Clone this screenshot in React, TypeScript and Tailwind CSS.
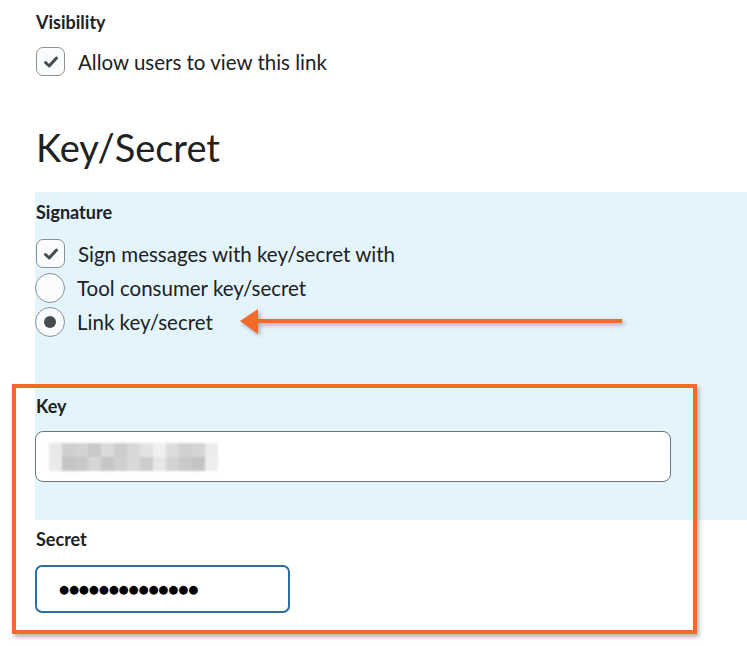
import React from "react";

function CheckBox() {
  return (
    <div className="w-[29px] h-[29px] rounded-[7px] border border-[#8a9094] bg-[#f9fbfc] flex items-center justify-center shrink-0">
      <svg width="16" height="14" viewBox="0 0 16 14">
        <path d="M2.5 7.5 L6.2 11 L13.5 3" fill="none" stroke="#494c4e" strokeWidth="3" strokeLinecap="round" strokeLinejoin="round" />
      </svg>
    </div>
  );
}

function Radio({ checked }: { checked?: boolean }) {
  return (
    <div className="w-[30px] h-[30px] rounded-full border border-[#8a9094] bg-[#f9fbfc] flex items-center justify-center shrink-0">
      {checked && <div className="w-[12px] h-[12px] rounded-full bg-[#494c4e]" />}
    </div>
  );
}

const mosaicRow1 = ["#e8e8e8", "#cfcfcf", "#d3d3d3", "#c9c9c9", "#dadada", "#cdcdcd", "#d8d8d8", "#e3e3e3", "#f0f0f0", "#dcdcdc", "#d0d0d0", "#d5d5d5", "#ececec"];
const mosaicRow2 = ["#eaeaea", "#c4c4c4", "#c8c8c8", "#d6d6d6", "#c6c6c6", "#cfcfcf", "#d9d9d9", "#cccccc", "#e7e7e7", "#d3d3d3", "#c9c9c9", "#c4c4c4", "#eeeeee"];

export default function App() {
  return (
    <div className="relative w-[747px] h-[646px] bg-white overflow-hidden text-[#202122]" style={{ fontFamily: "Lato, 'Noto Sans', sans-serif" }}>
      <div className="pl-[36px] pt-[11px]">
        <div className="text-[18px] leading-[22px] font-bold">Visibility</div>
        <div className="mt-[14px] flex items-center gap-[13px] h-[29px]">
          <CheckBox />
          <span className="text-[20.5px] leading-[24px]">Allow users to view this link</span>
        </div>
        <h1 className="mt-[47px] text-[38px] leading-[48px] font-normal">Key/Secret</h1>
      </div>

      <div className="ml-[35px] mt-[21px] bg-[#e4f4fd] pl-[1px] pt-[9px] pb-[38px]">
        <div className="text-[18px] leading-[22px] font-bold">Signature</div>
        <div className="mt-[16px] flex flex-col">
          <div className="flex items-center gap-[13px] h-[29px]">
            <CheckBox />
            <span className="text-[20.5px] leading-[24px]">Sign messages with key/secret with</span>
          </div>
          <div className="mt-[5px] flex items-center gap-[12px] h-[30px] -ml-[1px]">
            <Radio />
            <span className="text-[20.5px] leading-[24px]">Tool consumer key/secret</span>
          </div>
          <div className="mt-[4px] flex items-center gap-[12px] h-[30px] -ml-[1px]">
            <Radio checked />
            <span className="text-[20.5px] leading-[24px]">Link key/secret</span>
          </div>
        </div>
        <div className="mt-[58px] text-[18px] leading-[22px] font-bold">Key</div>
        <div className="mt-[14px] -ml-[1px] w-[636px] h-[51px] rounded-[8px] border border-[#6e7477] bg-white flex items-center pl-[13px]">
          <div className="flex flex-col blur-[1px]">
            <div className="flex">
              {mosaicRow1.map((c, i) => (
                <div key={i} className="w-[13px] h-[14px]" style={{ background: c }} />
              ))}
            </div>
            <div className="flex">
              {mosaicRow2.map((c, i) => (
                <div key={i} className="w-[13px] h-[14px]" style={{ background: c }} />
              ))}
            </div>
          </div>
        </div>
      </div>

      <div className="pl-[36px] pt-[8px]">
        <div className="text-[18px] leading-[22px] font-bold">Secret</div>
        <div className="mt-[15px] -ml-[1px] w-[255px] h-[48px] rounded-[7px] border-2 border-[#2a6fa0] bg-white flex items-center pl-[22px]">
          <span className="text-[11.5px] leading-[20px] tracking-[-0.1px] text-black" style={{ fontFamily: "'DejaVu Sans', sans-serif" }}>
            ●●●●●●●●●●●●●●
          </span>
        </div>
      </div>

      {/* Orange highlight rectangle */}
      <div className="absolute left-[12px] top-[384px] w-[685px] h-[250px] border-[4px] border-[#f26b2b] shadow-[2px_3px_4px_rgba(0,0,0,0.3)] pointer-events-none" />

      {/* Arrow */}
      <svg className="absolute left-[236px] top-[304px] pointer-events-none" width="392" height="36" viewBox="236 304 392 36" style={{ filter: "drop-shadow(2px 2px 2px rgba(0,0,0,0.3))" }}>
        <line x1="254" y1="321" x2="622" y2="321" stroke="#f26b2b" strokeWidth="4" />
        <polygon points="240,321 258,309 258,334" fill="#f26b2b" />
      </svg>
    </div>
  );
}
